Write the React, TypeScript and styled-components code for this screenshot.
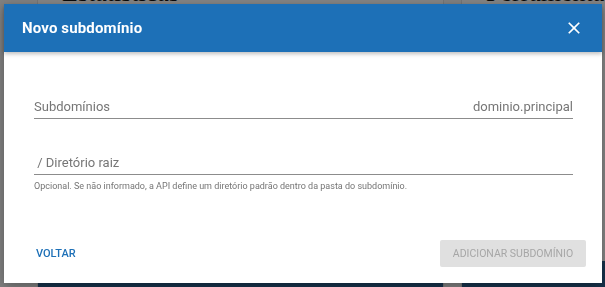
import React from "react";
import styled, { createGlobalStyle } from "styled-components";

const Global = createGlobalStyle`
  html, body { margin: 0; padding: 0; }
  body {
    width: 605px;
    height: 287px;
    overflow: hidden;
    background: #f2f2f2;
    font-family: Roboto, "Liberation Sans", sans-serif;
  }
`;

const Page = styled.div`
  display: flex;
  gap: 17px;
  padding-left: 37px;
  margin-top: -22px;
`;

const Card = styled.div<{ $w: number }>`
  width: ${(p) => p.$w}px;
  flex-shrink: 0;
  display: flex;
  flex-direction: column;
  background: #fafafa;
  border-left: 1px solid #ddd;
  border-right: 1px solid #ddd;
`;

const CardTitle = styled.div`
  font-family: "Liberation Serif", serif;
  font-size: 26px;
  line-height: 30px;
  color: #111;
  padding-left: 24px;
  height: 283px;
`;

const CardBody = styled.div`
  height: 60px;
  background: #2c5f8e;
`;

const Overlay = styled.div`
  position: fixed;
  inset: 0;
  background: rgba(0, 0, 0, 0.47);
`;

const Dialog = styled.div`
  position: fixed;
  left: 4px;
  top: 4px;
  width: 598px;
  height: 279px;
  background: #fff;
  display: flex;
  flex-direction: column;
  box-shadow: 0 4px 12px rgba(0, 0, 0, 0.3);
`;

const Header = styled.div`
  height: 48px;
  flex-shrink: 0;
  background: #1d70b7;
  display: flex;
  align-items: center;
  justify-content: space-between;
  padding: 0 16px 0 18px;
  box-shadow: 0 2px 4px rgba(0, 0, 0, 0.25);
  position: relative;
  z-index: 1;
`;

const Title = styled.h2`
  margin: 0;
  color: #fff;
  font-size: 15px;
  font-weight: 700;
  letter-spacing: 0.15px;
`;

const CloseButton = styled.button`
  border: 0;
  background: none;
  padding: 0;
  width: 24px;
  height: 24px;
  display: flex;
  align-items: center;
  justify-content: center;
  color: #fff;
  cursor: pointer;
`;

const Body = styled.div`
  flex: 1;
  display: flex;
  flex-direction: column;
  gap: 32px;
  padding: 43px 29px 0 30px;
`;

const Field = styled.div`
  display: flex;
  flex-direction: column;
`;

const InputRow = styled.div`
  display: flex;
  justify-content: space-between;
  align-items: center;
  height: 22px;
  border-bottom: 1px solid #8c8c8c;
  font-size: 13px;
  color: #767676;
  padding-bottom: 1px;
`;

const Helper = styled.div`
  font-size: 9px;
  color: #757575;
  margin-top: 6px;
`;

const Footer = styled.div`
  display: flex;
  justify-content: space-between;
  align-items: center;
  padding: 0 16px 16px 24px;
`;

const TextButton = styled.button`
  border: 0;
  background: none;
  padding: 6px 8px;
  color: #1d70b7;
  font-family: inherit;
  font-size: 11px;
  font-weight: 500;
  cursor: pointer;
`;

const FilledButton = styled.button`
  border: 0;
  border-radius: 2px;
  background: #e0e0e0;
  color: #a6a6a6;
  width: 146px;
  height: 27px;
  font-family: inherit;
  font-size: 10.5px;
  font-weight: 400;
`;

export default function App() {
  return (
    <>
      <Global />
      <Page>
        <Card $w={405}>
          <CardTitle>Estatísticas</CardTitle>
          <CardBody />
        </Card>
        <Card $w={200}>
          <CardTitle>Ferramentas</CardTitle>
          <CardBody />
        </Card>
      </Page>
      <Overlay />
      <Dialog>
        <Header>
          <Title>Novo subdomínio</Title>
          <CloseButton aria-label="Fechar">
            <svg width="20" height="20" viewBox="0 0 24 24" fill="currentColor">
              <path d="M19 6.41L17.59 5 12 10.59 6.41 5 5 6.41 10.59 12 5 17.59 6.41 19 12 13.41 17.59 19 19 17.59 13.41 12z" />
            </svg>
          </CloseButton>
        </Header>
        <Body>
          <Field>
            <InputRow>
              <span>Subdomínios</span>
              <span>dominio.principal</span>
            </InputRow>
          </Field>
          <Field>
            <InputRow>
              <span>&nbsp;/ Diretório raiz</span>
            </InputRow>
            <Helper>
              Opcional. Se não informado, a API define um diretório padrão dentro da pasta do subdomínio.
            </Helper>
          </Field>
        </Body>
        <Footer>
          <TextButton>VOLTAR</TextButton>
          <FilledButton disabled>ADICIONAR SUBDOMÍNIO</FilledButton>
        </Footer>
      </Dialog>
    </>
  );
}
